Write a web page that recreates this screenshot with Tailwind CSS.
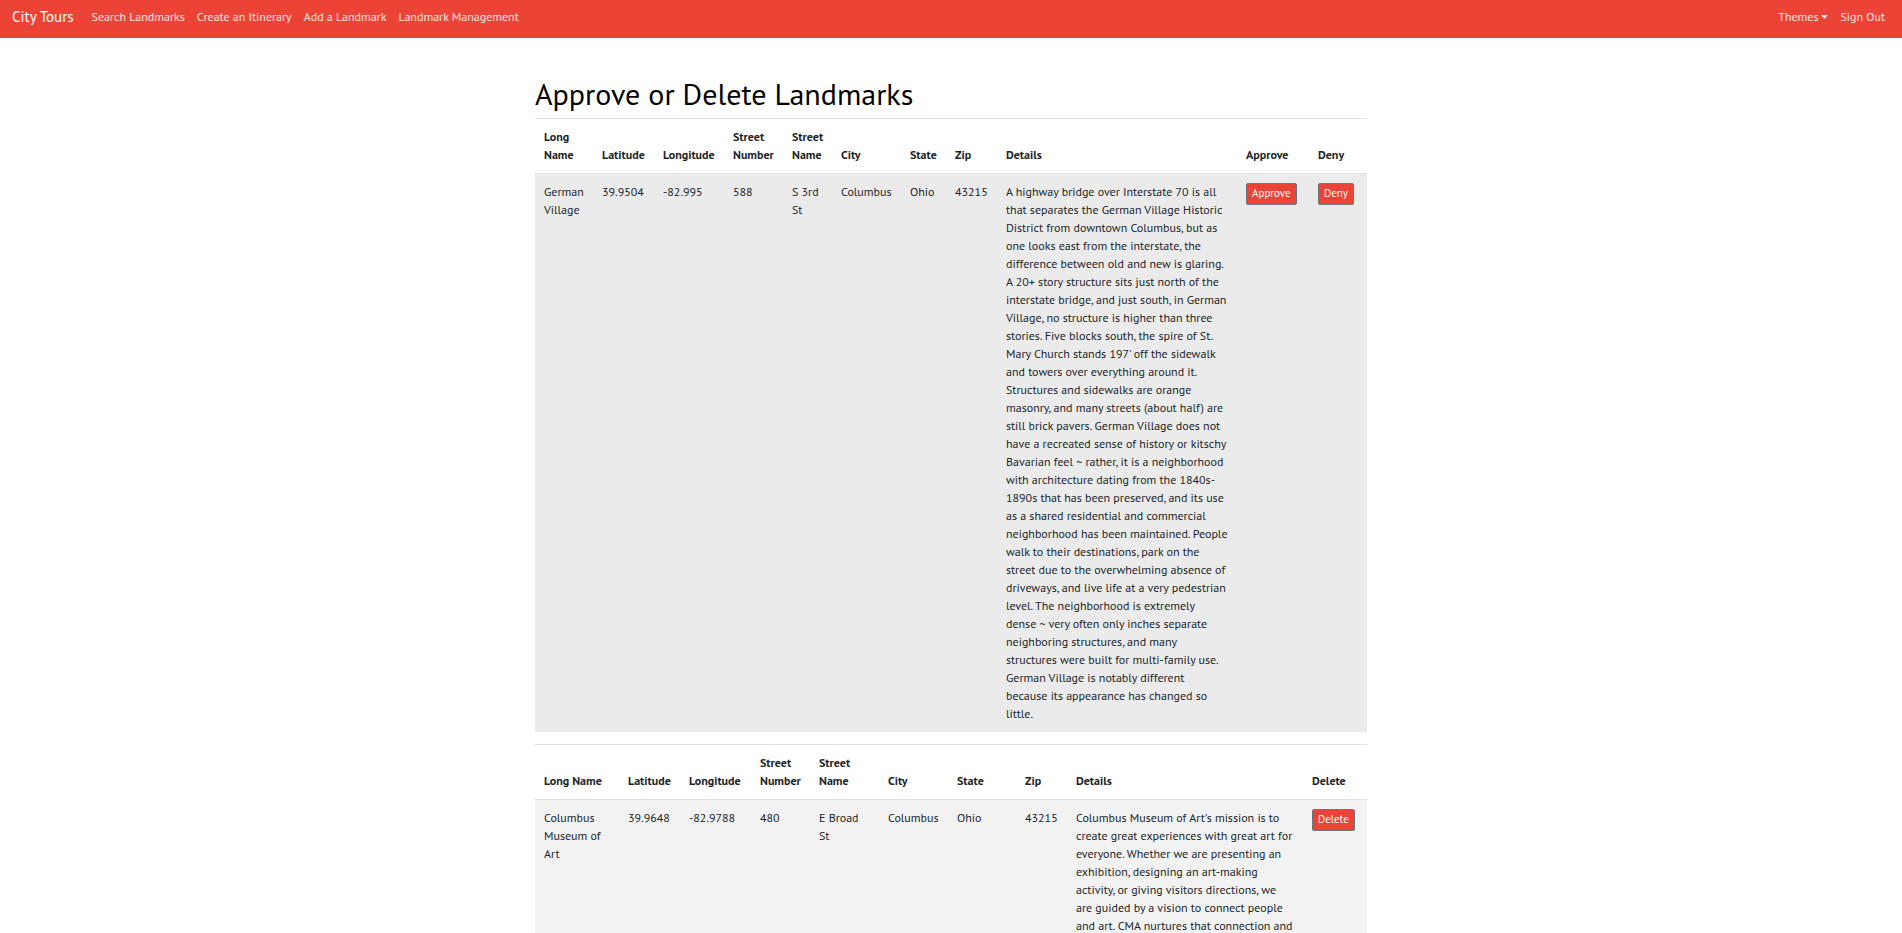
<!DOCTYPE html>
<html lang="en">
<head>
<meta charset="utf-8">
<title>City Tours</title>
<script src="https://cdn.jsdelivr.net/npm/@tailwindcss/browser@4"></script>
</head>
<body class="h-screen overflow-hidden bg-white font-['PT_Sans',Lato,sans-serif] text-[12px] leading-[18px] text-[#212529]">
<nav class="flex h-[38px] items-center bg-[#eb4437] px-3 pb-1 text-white/85">
  <a href="#" class="mr-[18px] text-[15px] text-white">City Tours</a>
  <div class="flex flex-1 gap-3">
    <a href="#">Search Landmarks</a>
    <a href="#">Create an Itinerary</a>
    <a href="#">Add a Landmark</a>
    <a href="#">Landmark Management</a>
  </div>
  <div class="flex gap-3 pr-[5px]">
    <a href="#" class="flex items-center gap-[3px]">Themes
      <svg class="mb-px h-1 w-[7px]" viewBox="0 0 7 4" fill="currentColor" aria-hidden="true"><path d="M0 0h7L3.500 4z"/></svg>
    </a>
    <a href="#">Sign Out</a>
  </div>
</nav>
<main class="mx-auto max-w-[832px] pt-[38px]">
  <h1 class="mb-1.5 text-[30px] leading-9 text-black">Approve or Delete Landmarks</h1>
  <table class="mb-3 w-full table-fixed border-separate border-spacing-0 border-t border-[#dee2e6] text-left">
    <colgroup>
      <col class="w-[58px]"><col class="w-[61px]"><col class="w-[70px]"><col class="w-[59px]"><col class="w-[49px]"><col class="w-[69px]"><col class="w-[45px]"><col class="w-[51px]"><col class="w-[240px]"><col class="w-[72px]"><col>
    </colgroup>
    <thead class="align-bottom [&_th]:border-b [&_th]:border-[#dee2e6] [&_th]:py-[9px] [&_th]:pl-[9px] [&_th]:font-bold">
      <tr><th>Long<br>Name</th><th>Latitude</th><th>Longitude</th><th>Street<br>Number</th><th>Street<br>Name</th><th>City</th><th>State</th><th>Zip</th><th>Details</th><th>Approve</th><th>Deny</th></tr>
    </thead>
    <tbody class="bg-[#ebebeb] align-top whitespace-nowrap [&_td]:py-[9px] [&_td]:pl-[9px]">
      <tr>
        <td>German<br>Village</td><td>39.9504</td><td>-82.995</td><td>588</td><td>S 3rd<br>St</td><td>Columbus</td><td>Ohio</td><td>43215</td>
        <td>A highway bridge over Interstate 70 is all<br>
that separates the German Village Historic<br>
District from downtown Columbus, but as<br>
one looks east from the interstate, the<br>
difference between old and new is glaring.<br>
A 20+ story structure sits just north of the<br>
interstate bridge, and just south, in German<br>
Village, no structure is higher than three<br>
stories. Five blocks south, the spire of St.<br>
Mary Church stands 197' off the sidewalk<br>
and towers over everything around it.<br>
Structures and sidewalks are orange<br>
masonry, and many streets (about half) are<br>
still brick pavers. German Village does not<br>
have a recreated sense of history or kitschy<br>
Bavarian feel ~ rather, it is a neighborhood<br>
with architecture dating from the 1840s-<br>
1890s that has been preserved, and its use<br>
as a shared residential and commercial<br>
neighborhood has been maintained. People<br>
walk to their destinations, park on the<br>
street due to the overwhelming absence of<br>
driveways, and live life at a very pedestrian<br>
level. The neighborhood is extremely<br>
dense ~ very often only inches separate<br>
neighboring structures, and many<br>
structures were built for multi-family use.<br>
German Village is notably different<br>
because its appearance has changed so<br>
little.</td>
        <td><button type="button" class="block h-[22px] rounded-[2px] border border-[#6c757d] bg-[#eb4437] px-[5px] pb-0.5 text-[11px] leading-4 text-white">Approve</button></td>
        <td><button type="button" class="block h-[22px] rounded-[2px] border border-[#6c757d] bg-[#eb4437] px-[5px] pb-0.5 text-[11px] leading-4 text-white">Deny</button></td>
      </tr>
    </tbody>
  </table>
  <table class="w-full table-fixed border-separate border-spacing-0 border-t border-[#dee2e6] text-left">
    <colgroup>
      <col class="w-[84px]"><col class="w-[61px]"><col class="w-[71px]"><col class="w-[59px]"><col class="w-[69px]"><col class="w-[69px]"><col class="w-[68px]"><col class="w-[51px]"><col class="w-[236px]"><col>
    </colgroup>
    <thead class="align-bottom [&_th]:border-b [&_th]:border-[#dee2e6] [&_th]:py-[9px] [&_th]:pl-[9px] [&_th]:font-bold">
      <tr><th>Long Name</th><th>Latitude</th><th>Longitude</th><th>Street<br>Number</th><th>Street<br>Name</th><th>City</th><th>State</th><th>Zip</th><th>Details</th><th>Delete</th></tr>
    </thead>
    <tbody class="bg-[#f2f2f2] align-top whitespace-nowrap [&_td]:py-[9px] [&_td]:pl-[9px]">
      <tr>
        <td>Columbus<br>Museum of<br>Art</td><td>39.9648</td><td>-82.9788</td><td>480</td><td>E Broad<br>St</td><td>Columbus</td><td>Ohio</td><td>43215</td>
        <td>Columbus Museum of Art's mission is to<br>
create great experiences with great art for<br>
everyone. Whether we are presenting an<br>
exhibition, designing an art-making<br>
activity, or giving visitors directions, we<br>
are guided by a vision to connect people<br>
and art. CMA nurtures that connection and</td>
        <td><button type="button" class="block h-[22px] rounded-[2px] border border-[#6c757d] bg-[#eb4437] px-[5px] pb-0.5 text-[11px] leading-4 text-white">Delete</button></td>
      </tr>
    </tbody>
  </table>
</main>
</body>
</html>
